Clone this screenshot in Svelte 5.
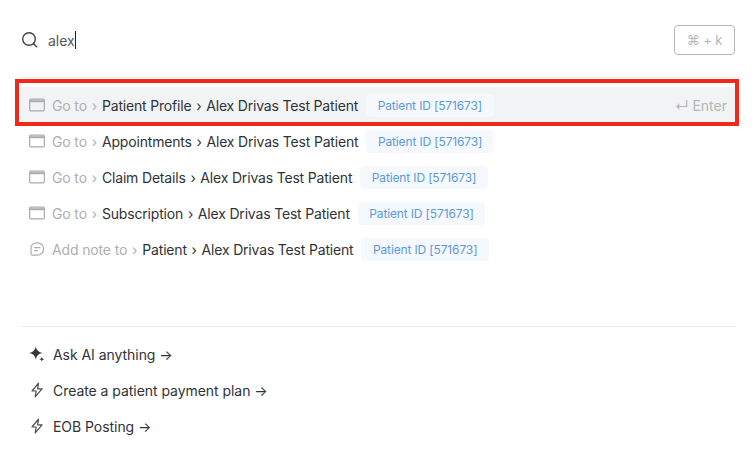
<script>
  const rows = [
    { icon: 'win', lead: 'Go to', path: 'Patient Profile', name: 'Alex Drivas Test Patient', active: true },
    { icon: 'win', lead: 'Go to', path: 'Appointments', name: 'Alex Drivas Test Patient' },
    { icon: 'win', lead: 'Go to', path: 'Claim Details', name: 'Alex Drivas Test Patient' },
    { icon: 'win', lead: 'Go to', path: 'Subscription', name: 'Alex Drivas Test Patient' },
    { icon: 'note', lead: 'Add note to', path: 'Patient', name: 'Alex Drivas Test Patient' }
  ];
  const actions = [
    { icon: 'spark', label: 'Ask AI anything →' },
    { icon: 'bolt', label: 'Create a patient payment plan →' },
    { icon: 'bolt', label: 'EOB Posting →' }
  ];
</script>

<div class="page">
  <header class="search">
    <svg class="search-icon" width="18" height="18" viewBox="0 0 18 18" fill="none" stroke="#3f4347" stroke-width="1.4" stroke-linecap="round">
      <circle cx="8" cy="8" r="6.3" />
      <path d="M12.700 12.700l3 3" />
    </svg>
    <span class="query">alex</span><span class="caret"></span>
    <span class="kbd">⌘ + k</span>
  </header>

  <ul class="results">
    {#each rows as row}
      <li class="row" class:active={row.active}>
        {#if row.icon === 'win'}
          <svg class="icon" width="16" height="14" viewBox="0 0 16 14" fill="none">
            <rect x="0.7" y="1.2" width="14.6" height="11.6" rx="1" stroke="#a9abad" stroke-width="1.2" />
            <path d="M0.7 3.2h14.6" stroke="#a9abad" stroke-width="2" />
          </svg>
        {:else}
          <svg class="icon" width="16" height="16" viewBox="0 0 16 16" fill="none" stroke="#a9abad" stroke-width="1.2" stroke-linecap="round" stroke-linejoin="round">
            <path d="M8.400 1.800h-1a5.400 5.400 0 0 0-5.400 5.400v5.800a1.200 1.200 0 0 0 1.200 1.200h5.200a6.200 6.200 0 0 0 0-12.400z" />
            <path d="M5.600 6.600h5.200M5.600 9.600h2.800" />
          </svg>
        {/if}
        <span class="lead">{row.lead} <span class="chev">›</span></span>
        <span class="crumb">{row.path} <span class="sep">›</span> {row.name}</span>
        <span class="tag">Patient ID [571673]</span>
        {#if row.active}
          <span class="enter">↵ Enter</span>
        {/if}
      </li>
    {/each}
  </ul>

  <footer class="actions">
    {#each actions as a}
      <div class="action">
        {#if a.icon === 'spark'}
          <svg class="aicon" width="16" height="16" viewBox="0 0 16 16" fill="#34383c">
            <path d="M6.800.6C7.400 4.200 9.600 6.400 13.400 7c-3.800.6-6 2.800-6.600 6.400C6.200 9.800 4 7.600.2 7 4 6.400 6.200 4.200 6.800.6z" />
            <path d="M12.800 10.800l.7 1.700 1.700.7-1.700.7-.7 1.700-.7-1.700-1.700-.7 1.700-.7z" />
          </svg>
        {:else}
          <svg class="aicon" width="16" height="16" viewBox="0 0 16 16" fill="none" stroke="#4a4e52" stroke-width="1.2" stroke-linejoin="round" stroke-linecap="round">
            <path d="M9.500 1.200L3 9h4.200l-1 5.800L13 6.800H8.600z" />
          </svg>
        {/if}
        <span>{a.label}</span>
      </div>
    {/each}
  </footer>
</div>

<style>
  :global(body) {
    margin: 0;
    background: #fff;
  }
  .page {
    width: 756px;
    height: 450px;
    box-sizing: border-box;
    padding: 0 21px;
    font-family: Inter, "Noto Sans", sans-serif;
    font-size: 14px;
    letter-spacing: -0.14px;
    color: #2f3337;
    overflow: hidden;
  }
  .search {
    display: flex;
    align-items: center;
    height: 78px;
    padding-top: 3px;
    border-bottom: 1px solid #e9eaeb;
    box-sizing: border-box;
  }
  .search-icon {
    flex: none;
  }
  .query {
    margin-left: 9px;
    color: #55595d;
    letter-spacing: 0;
  }
  .caret {
    width: 1px;
    height: 18px;
    background: #222;
  }
  .kbd {
    margin-left: auto;
    width: 61px;
    height: 30px;
    box-sizing: border-box;
    border: 1px solid #b4b6b8;
    border-radius: 4px;
    display: flex;
    align-items: center;
    justify-content: center;
    color: #b4b6b8;
    font-size: 13px;
  }
  .results {
    list-style: none;
    margin: 9px 0 0;
    padding: 0;
    height: 239px;
    border-bottom: 1px solid #e9eaeb;
  }
  .row {
    position: relative;
    display: flex;
    align-items: center;
    height: 36px;
    padding-left: 8px;
    white-space: nowrap;
  }
  .row.active {
    background: #f2f3f5;
  }
  .row.active::after {
    content: "";
    position: absolute;
    inset: -8px -4px -3px -6px;
    border: 4px solid #f0281a;
    pointer-events: none;
  }
  .icon {
    flex: none;
    margin-right: 7px;
  }
  .lead {
    color: #aeb0b2;
    margin-right: 5px;
  }
  .chev {
    margin-left: 1px;
  }
  .crumb {
    letter-spacing: -0.18px;
  }
  .sep {
    margin: 0 1px;
  }
  .tag {
    margin-left: 8px;
    padding: 0 11.5px;
    height: 23px;
    display: flex;
    align-items: center;
    background: #f5f8fd;
    border-radius: 4px;
    color: #5b9bdc;
    font-size: 12px;
    letter-spacing: -0.14px;
  }
  .enter {
    margin-left: auto;
    margin-right: 8px;
    color: #b4b6b8;
    letter-spacing: 0;
  }
  .actions {
    padding: 9px 8px 0;
    letter-spacing: -0.05px;
  }
  .action {
    display: flex;
    align-items: center;
    height: 36px;
  }
  .aicon {
    flex: none;
    margin-right: 8px;
  }
</style>
